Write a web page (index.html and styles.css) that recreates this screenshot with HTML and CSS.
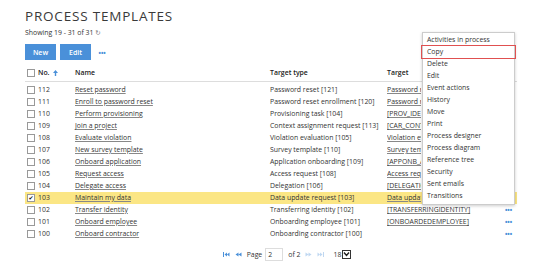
FILE: index.html
```html
<!DOCTYPE html>
<html lang="en">
<head>
  <meta charset="UTF-8" />
  <title>Process templates</title>
  <link rel="stylesheet" href="styles.css">
</head>
<body>
  <div class="page">
    <h1>PROCESS TEMPLATES</h1>
    <div class="showing">Showing 19 - 31 of 31 <span class="refresh">&#8635;</span></div>

    <div class="toolbar">
      <button class="btn">New</button>
      <button class="btn">Edit</button>
      <span class="dots">&bull;&bull;&bull;</span>
    </div>

    <div class="grid">
      <div class="row head">
        <div class="c-no"><span class="box"></span>No.<svg class="sort" width="5" height="6" viewBox="0 0 5 6"><path d="M2.5 0 L5 3 L3.2 3 L3.2 6 L1.8 6 L1.8 3 L0 3 Z" fill="#4a90d9"/></svg></div>
        <div>Name</div>
        <div>Target type</div>
        <div>Target</div>
        <div></div>
      </div>

      <div class="row"><div class="c-no"><span class="box"></span>112</div><div><a>Reset password</a></div><div>Password reset [121]</div><div class="tgt under"><a>Password reset</a></div><div class="more">&bull;&bull;&bull;</div></div>
      <div class="row"><div class="c-no"><span class="box"></span>111</div><div><a>Enroll to password reset</a></div><div>Password reset enrollment [120]</div><div class="tgt under"><a>Password reset enrollment</a></div><div class="more">&bull;&bull;&bull;</div></div>
      <div class="row"><div class="c-no"><span class="box"></span>110</div><div><a>Perform provisioning</a></div><div>Provisioning task [104]</div><div class="tgt under"><a>[PROV_IDENTITY]</a></div><div class="more">&bull;&bull;&bull;</div></div>
      <div class="row"><div class="c-no"><span class="box"></span>109</div><div><a>Join a project</a></div><div>Context assignment request [113]</div><div class="tgt under"><a>[CAR_CONTEXT]</a></div><div class="more">&bull;&bull;&bull;</div></div>
      <div class="row"><div class="c-no"><span class="box"></span>108</div><div><a>Evaluate violation</a></div><div>Violation evaluation [105]</div><div class="tgt under"><a>Violation evaluation</a></div><div class="more">&bull;&bull;&bull;</div></div>
      <div class="row"><div class="c-no"><span class="box"></span>107</div><div><a>New survey template</a></div><div>Survey template [110]</div><div class="tgt under"><a>Survey template</a></div><div class="more">&bull;&bull;&bull;</div></div>
      <div class="row"><div class="c-no"><span class="box"></span>106</div><div><a>Onboard application</a></div><div>Application onboarding [109]</div><div class="tgt under"><a>[APPONB_APPLICATION]</a></div><div class="more">&bull;&bull;&bull;</div></div>
      <div class="row"><div class="c-no"><span class="box"></span>105</div><div><a>Request access</a></div><div>Access request [108]</div><div class="tgt under"><a>Access request</a></div><div class="more">&bull;&bull;&bull;</div></div>
      <div class="row"><div class="c-no"><span class="box"></span>104</div><div><a>Delegate access</a></div><div>Delegation [106]</div><div class="tgt under"><a>[DELEGATION]</a></div><div class="more">&bull;&bull;&bull;</div></div>
      <div class="row selected"><div class="c-no"><span class="box checked">&#10004;</span>103</div><div><a>Maintain my data</a></div><div>Data update request [103]</div><div class="tgt under"><a>Data update request</a></div><div class="more">&bull;&bull;&bull;</div></div>
      <div class="row"><div class="c-no"><span class="box"></span>102</div><div><a>Transfer identity</a></div><div>Transferring identity [102]</div><div class="tgt"><a>[TRANSFERRINGIDENTITY]</a></div><div class="more">&bull;&bull;&bull;</div></div>
      <div class="row"><div class="c-no"><span class="box"></span>101</div><div><a>Onboard employee</a></div><div>Onboarding employee [101]</div><div class="tgt"><a>[ONBOARDEDEMPLOYEE]</a></div><div class="more">&bull;&bull;&bull;</div></div>
      <div class="row"><div class="c-no"><span class="box"></span>100</div><div><a>Onboard contractor</a></div><div>Onboarding contractor [100]</div><div class="tgt"></div><div class="more">&bull;&bull;&bull;</div></div>
    </div>

    <div class="pager">
      <svg class="pg" width="7" height="5" viewBox="0 0 7 5"><path d="M0.5 0 V5" stroke="#4a90d9" stroke-width="1"/><path d="M1.5 2.5 L4 0.5 V4.5 Z M4 2.5 L6.5 0.5 V4.5 Z" fill="#4a90d9"/></svg>
      <svg class="pg" width="7" height="5" viewBox="0 0 7 5"><path d="M0.5 2.5 L3.5 0.5 V4.5 Z M3.5 2.5 L6.5 0.5 V4.5 Z" fill="#4a90d9"/></svg>
      <span>Page</span>
      <span class="pinput">2</span>
      <span>of 2</span>
      <svg class="pg off" width="7" height="5" viewBox="0 0 7 5"><path d="M6.5 2.5 L3.5 0.5 V4.5 Z M3.5 2.5 L0.5 0.5 V4.5 Z" fill="#4a90d9"/></svg>
      <svg class="pg off" width="7" height="5" viewBox="0 0 7 5"><path d="M6.5 0 V5" stroke="#4a90d9" stroke-width="1"/><path d="M5.5 2.5 L3 0.5 V4.5 Z M3 2.5 L0.5 0.5 V4.5 Z" fill="#4a90d9"/></svg>
      <span class="sel">18<span class="sel-arrow"><svg width="7" height="6" viewBox="0 0 7 6"><path d="M1 1.5 L3.5 4.5 L6 1.5" stroke="#222" stroke-width="1.4" fill="none"/></svg></span></span>
    </div>
  </div>

  <ul class="menu">
    <li>Activities in process</li>
    <li class="active">Copy</li>
    <li>Delete</li>
    <li>Edit</li>
    <li>Event actions</li>
    <li>History</li>
    <li>Move</li>
    <li>Print</li>
    <li>Process designer</li>
    <li>Process diagram</li>
    <li>Reference tree</li>
    <li>Security</li>
    <li>Sent emails</li>
    <li>Transitions</li>
  </ul>
</body>
</html>
```

FILE: styles.css
```css
body { margin: 0; font-family: "Open Sans", "DejaVu Sans", sans-serif; font-size: 6.9px; color: #333; background: #fff; position: relative; width: 540px; height: 266px; overflow: hidden; }
.page { padding: 6px 23px 0 25px; }
h1 { margin: 0; font-family: "Open Sans", sans-serif; font-weight: 400; font-size: 13.5px; line-height: 20px; letter-spacing: 0.8px; color: #3a3a3a; }
.showing { margin-top: 2px; line-height: 10px; color: #333; }
.refresh { color: #777; font-size: 6.5px; }
.toolbar { display: flex; align-items: center; gap: 4px; margin-top: 6px; height: 16px; }
.btn { width: 31px; height: 16px; padding: 0; border: none; background: #4a90d9; color: #fff; font-family: inherit; font-size: 7px; font-weight: 600; }
.dots { color: #4a90d9; font-size: 9px; letter-spacing: -1px; margin-left: 3px; }
.grid { margin-top: 7px; width: 492px; }
.row { display: grid; grid-template-columns: 50px 195px 117px 1fr 18px; height: 12px; line-height: 12px; align-items: center; white-space: nowrap; }
.row.head { height: 12px; padding-bottom: 2px; font-weight: 600; color: #222; border-bottom: 1px solid #ddd; margin-bottom: 2px; }
.row.selected { background: #fbe685; }
.c-no { display: flex; align-items: center; padding-left: 2px; }
.box { width: 6px; height: 6px; border: 1px solid #999; background: #fff; margin-right: 3px; display: inline-flex; align-items: center; justify-content: center; font-size: 6px; line-height: 6px; color: #111; }
.sort { margin-left: 3px; }
.row a { color: #333; text-decoration: underline; text-decoration-color: #888; }
.tgt { overflow: hidden; }
.tgt.under { max-width: 34px; }
.more { color: #4a90d9; font-size: 9px; letter-spacing: -1px; text-align: center; }
.pager { display: flex; align-items: center; justify-content: center; gap: 5px; margin-top: 8px; padding-left: 32px; height: 12px; }
.pg.off { opacity: 0.35; }
.pinput { width: 14px; height: 11px; border: 1px solid #ddd; line-height: 11px; padding-left: 2px; margin-left: -2px; }
.sel { display: flex; align-items: center; gap: 1px; margin-left: 4px; }
.sel-arrow { width: 7px; height: 7px; border: 1px solid #333; display: flex; align-items: center; justify-content: center; }
.menu { position: absolute; left: 422px; top: 32px; width: 91px; margin: 0; padding: 1px 0 2px; list-style: none; background: #fff; border: 1px solid #ccc; box-shadow: 0 1px 3px rgba(0, 0, 0, 0.2); color: #333; }
.menu li { height: 12px; line-height: 12px; padding-left: 4px; }
.menu li.active { outline: 1.5px solid #e05050; outline-offset: 0; margin: 0 -1px; padding-left: 5px; }
```
